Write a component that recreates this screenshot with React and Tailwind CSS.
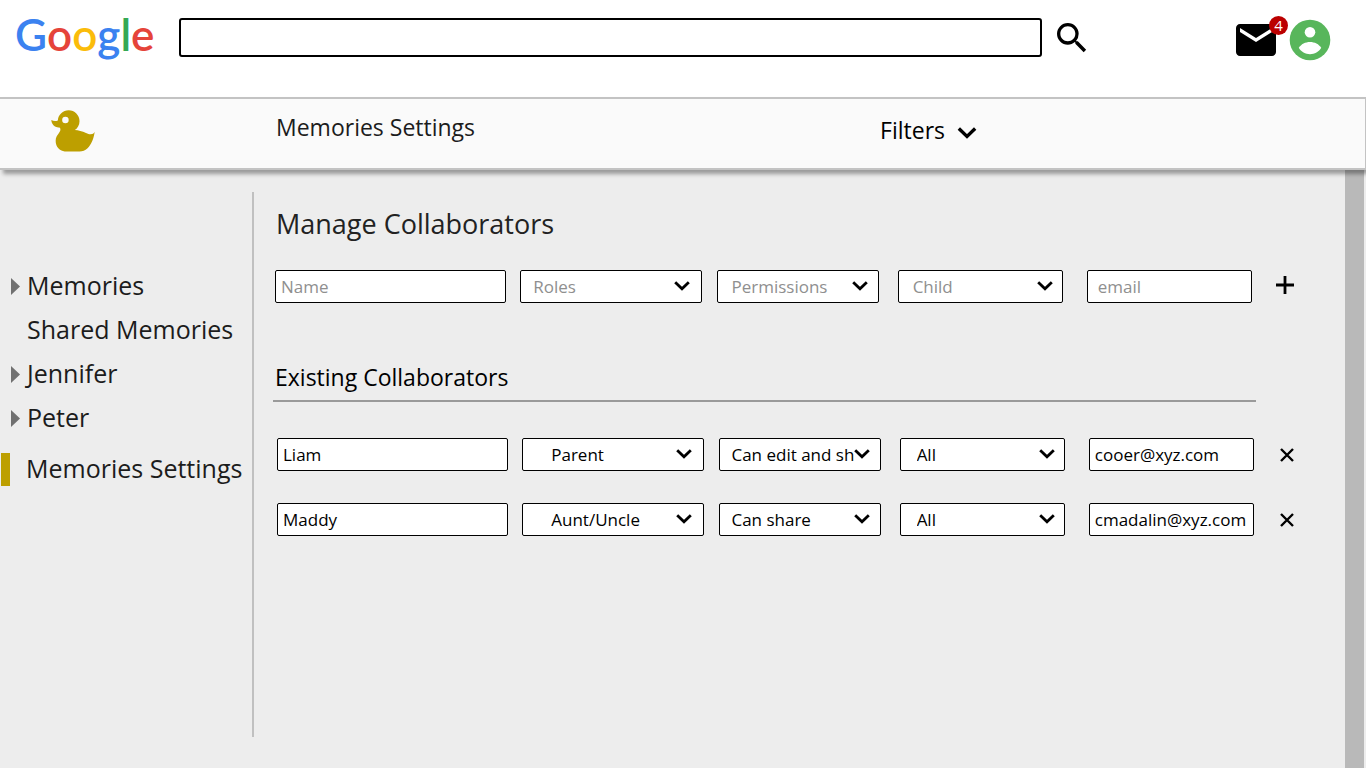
import React from "react";
import { MdSearch, MdEmail } from "react-icons/md";

const fieldBox =
  "h-[33px] w-full min-w-0 rounded-[2px] border border-black bg-white text-[17px] outline-none placeholder:text-[#8f8f8f] placeholder:opacity-100";

const rowGrid =
  "grid grid-cols-[231fr_183fr_161fr_170fr_175fr_38px] items-center gap-x-[14px]";

function Chevron({ className }) {
  return (
    <svg viewBox="0 0 16 10" fill="none" stroke="#000" strokeWidth="2.8" className={className} aria-hidden="true">
      <path d="M1.2 1.2 8 7.8l6.8-6.6" />
    </svg>
  );
}

function Dropdown({ label, options, value, placeholder, pad, chevron = "right-3" }) {
  return (
    <div className="relative min-w-0">
      <select
        aria-label={label}
        defaultValue={value ?? ""}
        className={`${fieldBox} ${pad} block appearance-none pr-[26px] ${value ? "text-black" : "text-[#8f8f8f]"}`}
      >
        {placeholder && <option value="">{placeholder}</option>}
        {options.map((o) => (
          <option key={o} value={o}>{o}</option>
        ))}
      </select>
      <Chevron className={`pointer-events-none absolute top-[11px] h-[10px] w-4 ${chevron}`} />
    </div>
  );
}

const roles = ["Parent", "Aunt/Uncle"];
const permissions = ["Can edit and share", "Can share"];
const children = ["All", "Jennifer", "Peter"];

const collaborators = [
  { name: "Liam", role: "Parent", permission: "Can edit and share", child: "All", email: "cooer@xyz.com" },
  { name: "Maddy", role: "Aunt/Uncle", permission: "Can share", child: "All", email: "cmadalin@xyz.com" },
];

const navItems = [
  { label: "Memories", expandable: true },
  { label: "Shared Memories" },
  { label: "Jennifer", expandable: true },
  { label: "Peter", expandable: true },
];

function Header() {
  return (
    <header className="flex h-[97px] items-start bg-white">
      <a
        href="#home"
        aria-label="Google"
        className="ml-[15px] mt-[6px] flex w-[164px] shrink-0 font-['Lato',sans-serif] text-[44px] font-semibold leading-[56px]"
      >
        <span className="text-[#3b82f0]">G</span>
        <span className="text-[#e5443a]">o</span>
        <span className="text-[#fbbc0a]">o</span>
        <span className="text-[#3b82f0]">g</span>
        <span className="text-[#34a853]">l</span>
        <span className="text-[#e5443a]">e</span>
      </a>
      <form className="flex flex-1 items-start" onSubmit={(e) => e.preventDefault()}>
        <input
          type="search"
          aria-label="Search"
          className="mt-[18px] h-[39px] min-w-0 flex-1 rounded-[3px] border-2 border-black bg-white px-3 text-[20px] outline-none"
        />
        <button aria-label="Search" className="ml-[10px] mt-[18px]">
          <MdSearch size={40} />
        </button>
      </form>
      <button aria-label="Mail, 4 unread" className="relative ml-[140px] mt-[16px]">
        <MdEmail size={48} />
        <span className="absolute right-[-8px] top-0 flex size-[19px] items-center justify-center rounded-full bg-[#bb0000] text-[15px] leading-none text-white">
          4
        </span>
      </button>
      <button aria-label="Account" className="ml-[6px] mr-8 mt-[16px]">
        <svg viewBox="0 0 48 48" className="size-12" aria-hidden="true">
          <circle cx="24" cy="24" r="20.3" fill="#58b65b" />
          <circle cx="24" cy="16.2" r="5.3" fill="#fff" />
          <path d="M12.8 31.8C15 28 19.5 25.9 24 25.9s9 2.1 11.2 5.9C33 35.8 28.5 38.2 24 38.2s-9-2.4-11.2-6.400z" fill="#fff" />
        </svg>
      </button>
    </header>
  );
}

function Toolbar() {
  return (
    <div className="relative z-10 flex h-[73px] items-start border-b-2 border-r border-t-2 border-[#c3c3c3] bg-[#fafafa] shadow-[3px_4px_4px_rgba(0,0,0,0.35)]">
      <a href="#duck" aria-label="Memories home" className="ml-[47px] mt-[7px] mr-[177px] shrink-0">
        <svg viewBox="0 0 24 24" className="size-[52px]" fill="#bd9f00" aria-hidden="true">
          <path d="M8.5 5A1.5 1.5 0 0 0 7 6.5 1.5 1.5 0 0 0 8.5 8 1.5 1.5 0 0 0 10 6.5 1.5 1.5 0 0 0 8.5 5M10 2a5 5 0 0 1 5 5c0 1.7-.85 3.2-2.14 4.1 1.58.15 3.36.51 5.14 1.4 3 1.5 4-.5 4-.5s-1 9-7 9H9s-5 0-5-5c0-3 3-4 2-6-4 0-4-3.5-4-3.5 1 .5 2.24.5 3 .15C5.19 4.05 7.36 2 10 2z" />
        </svg>
      </a>
      <h1 className="mt-[12px] flex-1 text-[23px] leading-8 text-[#1c1c1c]">Memories Settings</h1>
      <button className="mr-[388px] mt-[15px] flex shrink-0 items-center gap-3 text-[23px] leading-8">
        Filters
        <Chevron className="mt-[6px] h-3 w-5" />
      </button>
    </div>
  );
}

function Sidebar() {
  return (
    <aside className="mb-[31px] mt-[22px] w-[254px] shrink-0 border-r-2 border-[#c0c0c0] pt-[72px] text-[25px] text-[#1c1c1c]">
      <nav>
        {navItems.map((item) => (
          <a key={item.label} href="#nav" className="flex h-11 items-center">
            <span className="flex w-[27px] shrink-0 pl-[11px]">
              {item.expandable && (
                <svg viewBox="0 0 9 17" className="h-[17px] w-[9px]" fill="#707070" aria-hidden="true">
                  <path d="M0 0l9 8.5L0 17z" />
                </svg>
              )}
            </span>
            {item.label}
          </a>
        ))}
        <a href="#settings" aria-current="page" className="mt-[7px] flex h-11 items-center whitespace-nowrap">
          <span className="ml-px mr-[16px] h-[33px] w-[9px] bg-[#bd9f00]" />
          Memories Settings
        </a>
      </nav>
    </aside>
  );
}

export default function App() {
  return (
    <div className="flex min-h-screen flex-col bg-[#ededed] font-['Open_Sans','Noto_Sans',sans-serif] text-black">
      <Header />
      <Toolbar />
      <div className="flex flex-1">
        <Sidebar />
        <main className="min-w-0 flex-1 pl-[21px] pr-[41px] pt-[34px]">
          <h2 className="pl-px text-[27px] leading-10 text-[#222]">Manage Collaborators</h2>
          <form className={`${rowGrid} mt-[26px]`} onSubmit={(e) => e.preventDefault()}>
            <input aria-label="Name" placeholder="Name" className={`${fieldBox} px-[5px]`} />
            <div className="pr-px">
              <Dropdown label="Role" placeholder="Roles" options={roles} pad="pl-3" />
            </div>
            <Dropdown label="Permissions" placeholder="Permissions" options={permissions} pad="pl-[13px]" chevron="right-[11px]" />
            <div className="pl-[5px]">
              <Dropdown label="Child" placeholder="Child" options={children} pad="pl-[14px]" chevron="right-[10px]" />
            </div>
            <div className="pl-[10px]">
              <input type="email" aria-label="Email" placeholder="email" className={`${fieldBox} px-[10px]`} />
            </div>
            <button aria-label="Add collaborator" className="flex justify-center pb-[3px]">
              <svg viewBox="0 0 18 18" className="size-[18px]" stroke="#000" strokeWidth="2.8" aria-hidden="true">
                <path d="M9 0v18M0 9h18" />
              </svg>
            </button>
          </form>

          <h2 className="mt-[58px] text-[23px] leading-8">Existing Collaborators</h2>
          <hr className="-ml-[2px] mr-[48px] mt-[7px] border-t-2 border-[#9a9a9a]" />
          <ul className="-mr-[2px] ml-[2px] mt-9 flex flex-col gap-8">
            {collaborators.map((c) => (
              <li key={c.name} className={rowGrid}>
                <input aria-label="Name" defaultValue={c.name} className={`${fieldBox} px-[5px]`} />
                <div className="pr-px">
                  <Dropdown label="Role" value={c.role} options={roles} pad="pl-7" />
                </div>
                <Dropdown label="Permissions" value={c.permission} options={permissions} pad="pl-[11px]" chevron="right-[11px]" />
                <div className="pl-[5px]">
                  <Dropdown label="Child" value={c.child} options={children} pad="pl-4" chevron="right-[10px]" />
                </div>
                <div className="pl-[10px]">
                  <input type="email" aria-label="Email" defaultValue={c.email} className={`${fieldBox} px-[5px]`} />
                </div>
                <button aria-label={`Remove ${c.name}`} className="flex justify-center">
                  <svg viewBox="0 0 14 14" className="size-[14px]" stroke="#000" strokeWidth="2.4" aria-hidden="true">
                    <path d="M1 1l12 12M13 1 1 13" />
                  </svg>
                </button>
              </li>
            ))}
          </ul>
        </main>
        <div aria-hidden="true" className="mr-[2px] w-[19px] shrink-0 bg-[#b9b9b9]" />
      </div>
    </div>
  );
}
